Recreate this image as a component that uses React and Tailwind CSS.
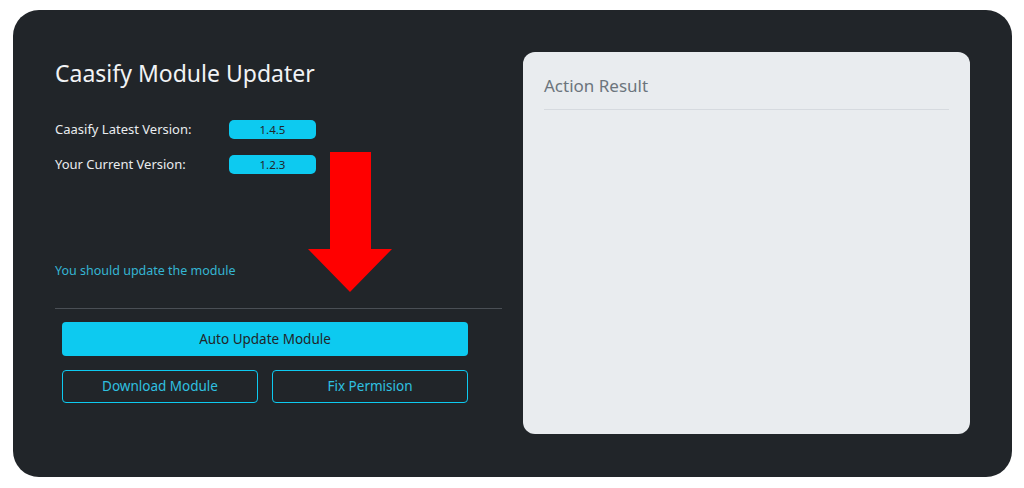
export default function App() {
  return (
    <div className="w-[1024px] h-[488px] bg-white pt-[10px] pl-[13px] font-['Noto_Sans',sans-serif]">
      <div className="w-[999px] h-[467px] rounded-[26px] bg-[#212529] px-[42px] pt-[42px] flex gap-[21px]">
        {/* left column */}
        <div className="relative w-[447px] h-[382px] flex flex-col">
          <h1 className="mt-[5px] text-[23px] leading-[32px] text-[#f1f3f5]">Caasify Module Updater</h1>

          <div className="mt-[31px] flex items-center h-[19px]">
            <span className="w-[174px] text-[13px] text-[#e9ecef]">Caasify Latest Version:</span>
            <span className="w-[87px] h-[19px] rounded-[5px] bg-[#0dcaf0] text-[11.5px] leading-[19px] text-center text-[#212529]">1.4.5</span>
          </div>
          <div className="mt-[16px] flex items-center h-[19px]">
            <span className="w-[174px] text-[13px] text-[#e9ecef]">Your Current Version:</span>
            <span className="w-[87px] h-[19px] rounded-[5px] bg-[#0dcaf0] text-[11.5px] leading-[19px] text-center text-[#212529]">1.2.3</span>
          </div>

          <p className="mt-[88px] text-[12.5px] leading-[18px] text-[#35b5d3]">You should update the module</p>

          <div className="mt-[28px] h-px bg-[#4a4f55]" />

          <div className="mt-[13px] ml-[7px] w-[406px] flex flex-col gap-[14px]">
            <button className="h-[34px] rounded-[4px] bg-[#0dcaf0] text-[13.5px] text-[#212529]">Auto Update Module</button>
            <div className="flex gap-[14px]">
              <button className="flex-1 h-[33px] rounded-[4px] border border-[#0dcaf0] text-[13.5px] text-[#2fc0e0]">Download Module</button>
              <button className="flex-1 h-[33px] rounded-[4px] border border-[#0dcaf0] text-[13.5px] text-[#2fc0e0]">Fix Permision</button>
            </div>
          </div>

          <svg className="absolute left-[253px] top-[100px]" width="84" height="142" viewBox="0 0 84 142">
            <polygon points="22,0 63,0 63,97 84,97 42,140 0,97 22,97" fill="#ff0000" />
          </svg>
        </div>

        {/* right panel */}
        <div className="w-[447px] h-[382px] rounded-[12px] bg-[#e9ecef] px-[21px] pt-[22px]">
          <h2 className="text-[17px] leading-[24px] text-[#6c757d]">Action Result</h2>
          <div className="mt-[11px] h-px bg-[#d6dadf]" />
        </div>
      </div>
    </div>
  )
}
